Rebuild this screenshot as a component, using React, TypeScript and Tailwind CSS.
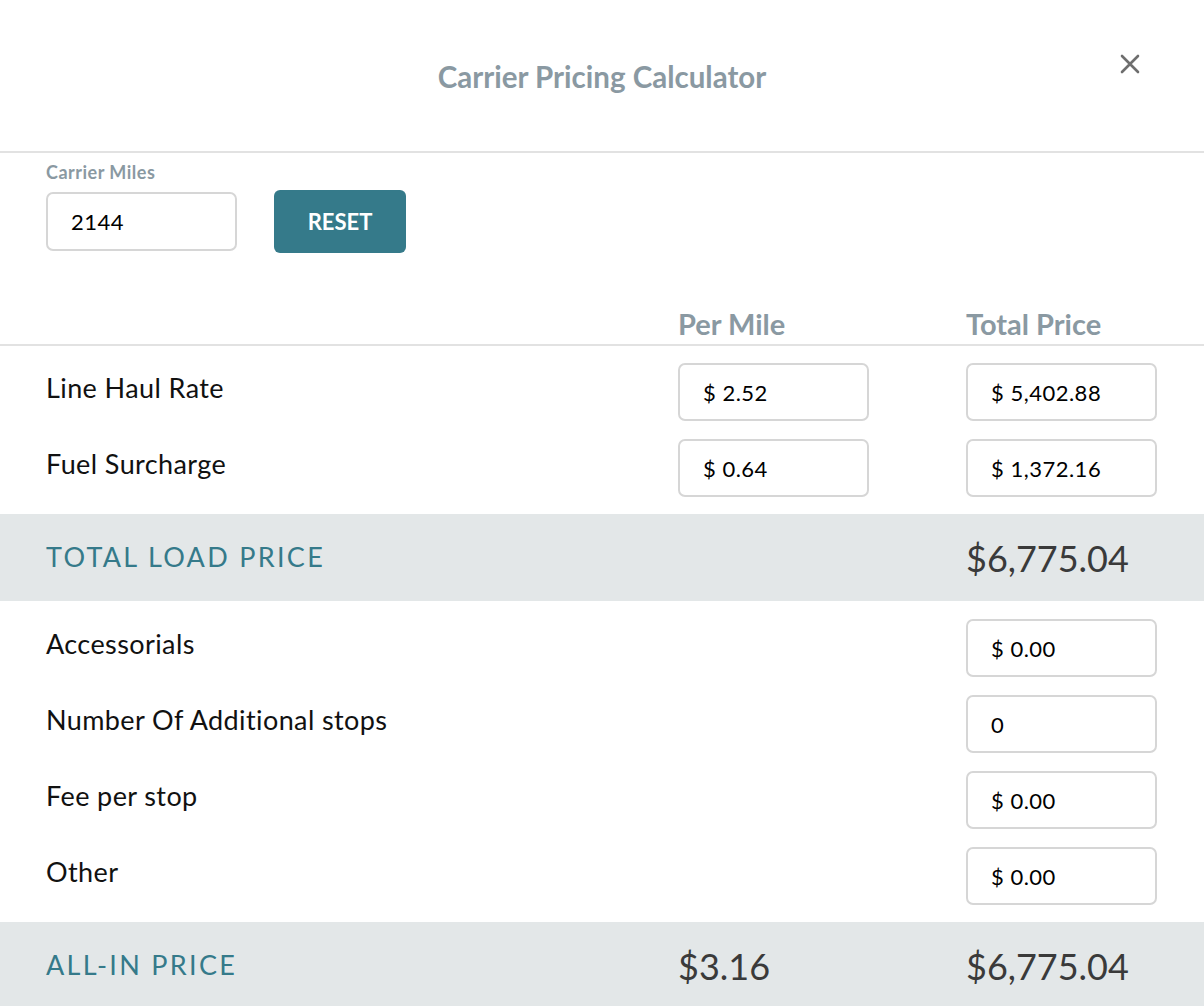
import React from "react";

const font = { fontFamily: "Lato, 'Open Sans', sans-serif" };

const Field = ({ value }: { value: string }) => (
  <div className="w-[191px] h-[58px] border-2 border-[#d6d6d6] rounded-[7px] flex items-center pl-[23px] text-[22px] tracking-[0.5px] text-black bg-white">
    {value}
  </div>
);

const Row = ({ label, perMile, total }: { label: string; perMile?: string; total: string }) => (
  <div className="grid grid-cols-[632px_288px_1fr] pl-[46px] items-start h-[58px]">
    <div className="text-[27px] tracking-[0.4px] text-[#111] pt-[10px] leading-[30px]">{label}</div>
    <div>{perMile ? <Field value={perMile} /> : null}</div>
    <div>
      <Field value={total} />
    </div>
  </div>
);

const Band = ({ label, perMile, total }: { label: string; perMile?: string; total: string }) => (
  <div className="grid grid-cols-[632px_288px_1fr] pl-[46px] items-center h-[87px] bg-[#e3e7e8]">
    <div className="text-[27px] tracking-[2.3px] text-[#357a8a]">{label}</div>
    <div className="text-[36px] text-[#3a3a3a]">{perMile}</div>
    <div className="text-[36px] text-[#3a3a3a]">{total}</div>
  </div>
);

export default function App() {
  return (
    <div className="w-[1204px] h-[1006px] bg-white overflow-hidden" style={font}>
      <div className="h-[153px] border-b-2 border-[#e2e2e2] relative flex items-start justify-center pt-[59px]">
        <h1 className="text-[29.5px] font-bold text-[#8a99a2] leading-[36px]">Carrier Pricing Calculator</h1>
        <button className="absolute right-[62px] top-[52px] w-[24px] h-[24px] flex items-center justify-center text-[#6e6e6e]">
          <svg width="20" height="20" viewBox="0 0 20 20" fill="none" stroke="currentColor" strokeWidth="2.6" strokeLinecap="round">
            <path d="M2 2 L18 18 M18 2 L2 18" />
          </svg>
        </button>
      </div>

      <div className="pl-[46px] pt-[8px]">
        <div className="text-[18px] font-bold tracking-[0.5px] text-[#8a99a2] leading-[22px]">Carrier Miles</div>
        <div className="flex items-center gap-[37px] mt-[7px]">
          <div className="w-[191px] h-[59px] border-2 border-[#d6d6d6] rounded-[7px] flex items-center pl-[23px] text-[22px] tracking-[0.5px] text-black">
            2144
          </div>
          <button className="w-[132px] h-[63px] bg-[#357a8a] rounded-[6px] text-white text-[22px] font-bold">
            RESET
          </button>
        </div>
      </div>

      <div className="grid grid-cols-[678px_288px_1fr] mt-[55px] border-b-2 border-[#e2e2e2] pb-[4px]">
        <div />
        <div className="text-[29px] font-bold text-[#8a99a2] leading-[32px]">Per Mile</div>
        <div className="text-[29px] font-bold text-[#8a99a2] leading-[32px]">Total Price</div>
      </div>

      <div className="flex flex-col gap-[18px] pt-[17px] pb-[17px]">
        <Row label="Line Haul Rate" perMile="$ 2.52" total="$ 5,402.88" />
        <Row label="Fuel Surcharge" perMile="$ 0.64" total="$ 1,372.16" />
      </div>

      <Band label="TOTAL LOAD PRICE" total="$6,775.04" />

      <div className="flex flex-col gap-[18px] pt-[18px] pb-[17px]">
        <Row label="Accessorials" total="$ 0.00" />
        <Row label="Number Of Additional stops" total="0" />
        <Row label="Fee per stop" total="$ 0.00" />
        <Row label="Other" total="$ 0.00" />
      </div>

      <Band label="ALL-IN PRICE" perMile="$3.16" total="$6,775.04" />
    </div>
  );
}
